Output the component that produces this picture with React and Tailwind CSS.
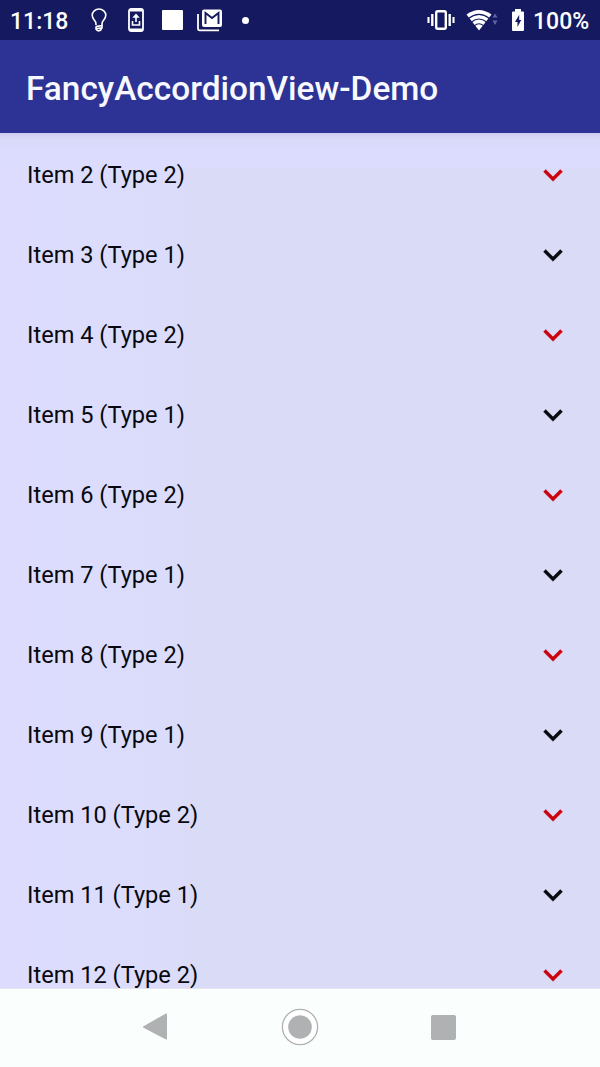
import React from "react";

const items = Array.from({ length: 11 }, (_, i) => {
  const number = i + 2;
  return { number, type: number % 2 === 0 ? 2 : 1 };
});

function StatusBar() {
  return (
    <div className="flex h-10 shrink-0 items-center bg-[#15195f] text-[23px] font-medium leading-none text-white">
      <span className="ml-[10px] mt-[3px] w-[58px] whitespace-nowrap">11:18</span>
      <svg className="ml-[23px] shrink-0" width="16" height="24" viewBox="0 0 16 24" fill="none" stroke="white" strokeWidth="1.6">
        <path d="M5 17 4.8 14.5C3.8 12 1.2 10.8 1.2 7.3a6.8 6.3 0 0 1 13.6 0c0 3.5-2.6 4.7-3.6 7.2L11 17.5 4.8 18.6" />
        <path d="M5 18.6v2.2l6-1v-2.3M5.3 21.3c.8 2.2 4.5 2.2 5.4-1" />
      </svg>
      <svg className="ml-[21px] shrink-0" width="16" height="24" viewBox="0 0 16 24" fill="none" stroke="white">
        <rect x="1" y="1" width="14" height="22" rx="2" strokeWidth="1.8" />
        <path d="M1.5 2.5h13M1.5 21.5h13" strokeWidth="2" />
        <path d="M8 14V8M4.5 13v4h7v-4" strokeWidth="1.6" />
        <path d="M8 5.5 4.3 9.7h7.4z" fill="white" stroke="none" />
      </svg>
      <span className="ml-[18px] h-5 w-[21px] shrink-0 rounded-[1px] bg-white" />
      <svg className="ml-[14px] shrink-0" width="26" height="23" viewBox="0 0 26 23" fill="none">
        <path d="M1 5v14.5q0 1.8 1.8 1.8H22" stroke="white" strokeWidth="1.8" />
        <rect x="5" y=".5" width="20" height="17.5" rx="2" fill="white" />
        <path d="M8.5 15V4L15 9l6.5-5V15" stroke="#15195f" strokeWidth="1.9" />
      </svg>
      <span className="ml-[19px] size-[7px] shrink-0 rounded-full bg-white" />
      <svg className="ml-auto shrink-0" width="28" height="20" viewBox="0 0 28 20" fill="none" stroke="white">
        <rect x="9.2" y="1.2" width="9.6" height="17.6" rx="1.5" strokeWidth="2.4" />
        <path d="M5.3 4v12M22.7 4v12" strokeWidth="2.4" />
        <path d="M1.5 7v6M26.5 7v6" strokeWidth="2.1" />
      </svg>
      <svg className="ml-[11px] shrink-0" width="33" height="21" viewBox="0 0 33 21">
        <path d="M.5 4.5Q13 -4.5 25.5 4.5L13 20.5Z" fill="white" />
        <path d="M2.8 8.2q10.2-7.7 20.4 0M5.5 12q7.5-6 15 0M8.5 15.7q4.5-4 9 0" fill="none" stroke="#15195f" strokeWidth="1.1" />
        <path d="M26.5 7.5 29 3.5l2.5 4zM26.5 10.5h5L29 15z" fill="#5f64a8" />
      </svg>
      <svg className="ml-[13px] shrink-0" width="12" height="22" viewBox="0 0 12 22">
        <path d="M3 0h6v2.5h2q1 0 1 1V21q0 1-1 1H1q-1 0-1-1V3.5q0-1 1-1h2z" fill="white" />
        <path d="M7.2 5.8 3 13H5.5v5L9.2 11H7.2z" fill="#15195f" />
      </svg>
      <span className="ml-[9px] mr-[10px] mt-[3px] w-[57px] whitespace-nowrap">100%</span>
    </div>
  );
}

function AccordionItem({ number, type }) {
  return (
    <button className="flex h-20 w-full shrink-0 items-center justify-between pl-[27px] pr-7 text-left">
      <span className="pt-[2px] text-[23.6px] leading-none text-[#08080f]">
        Item {number} (Type {type})
      </span>
      <svg
        className={type === 2 ? "mb-px text-[#cd000d]" : "mb-px text-[#08080f]"}
        width="38"
        height="38"
        viewBox="0 0 24 24"
        fill="currentColor"
      >
        <path d="M16.59 8.59 12 13.17 7.41 8.59 6 10l6 6 6-6z" stroke="currentColor" strokeWidth=".25" />
      </svg>
    </button>
  );
}

function NavigationBar() {
  return (
    <nav className="flex h-[79px] shrink-0 items-center justify-between border-t border-[#e5e3ef] bg-[#fafffe] pb-[2px] pl-[142px] pr-[144px]">
      <svg width="26" height="28" viewBox="0 0 26 28" fill="#b0b1b3">
        <path d="M1.5 13.2 23.5.7Q25 0 25 1.5v24q0 1.5-1.5.8L1.5 14.8q-1-.8 0-1.6z" />
      </svg>
      <svg width="38" height="38" viewBox="0 0 38 38">
        <circle cx="19" cy="19" r="17.6" fill="white" stroke="#b0b1b3" strokeWidth="1.3" />
        <circle cx="19" cy="19" r="11.8" fill="#b0b1b3" />
      </svg>
      <span className="size-[25px] rounded-[2px] bg-[#b0b1b3]" />
    </nav>
  );
}

export default function App() {
  return (
    <div className="flex h-[1067px] w-[600px] flex-col overflow-hidden font-['Roboto',sans-serif]">
      <StatusBar />
      <header className="flex h-[93px] shrink-0 items-center bg-[#2d3394] pl-[26px] pt-[5px]">
        <h1 className="text-[33.4px] font-medium leading-none text-[#f8f8ff]">FancyAccordionView-Demo</h1>
      </header>
      <main className="flex min-h-0 flex-1 flex-col overflow-hidden bg-[linear-gradient(180deg,#cdcdef_0px,#d9d9fa_6px,#dcdcfe_18px,#dcdcfe_34px,transparent_36px),linear-gradient(90deg,#dddcff_0px,#dcdcfd_100px,#dbdbfa_180px,#dadbf6_200px,#dadbf6_100%)] pt-[2px]">
        {items.map((item) => (
          <AccordionItem key={item.number} number={item.number} type={item.type} />
        ))}
      </main>
      <NavigationBar />
    </div>
  );
}
